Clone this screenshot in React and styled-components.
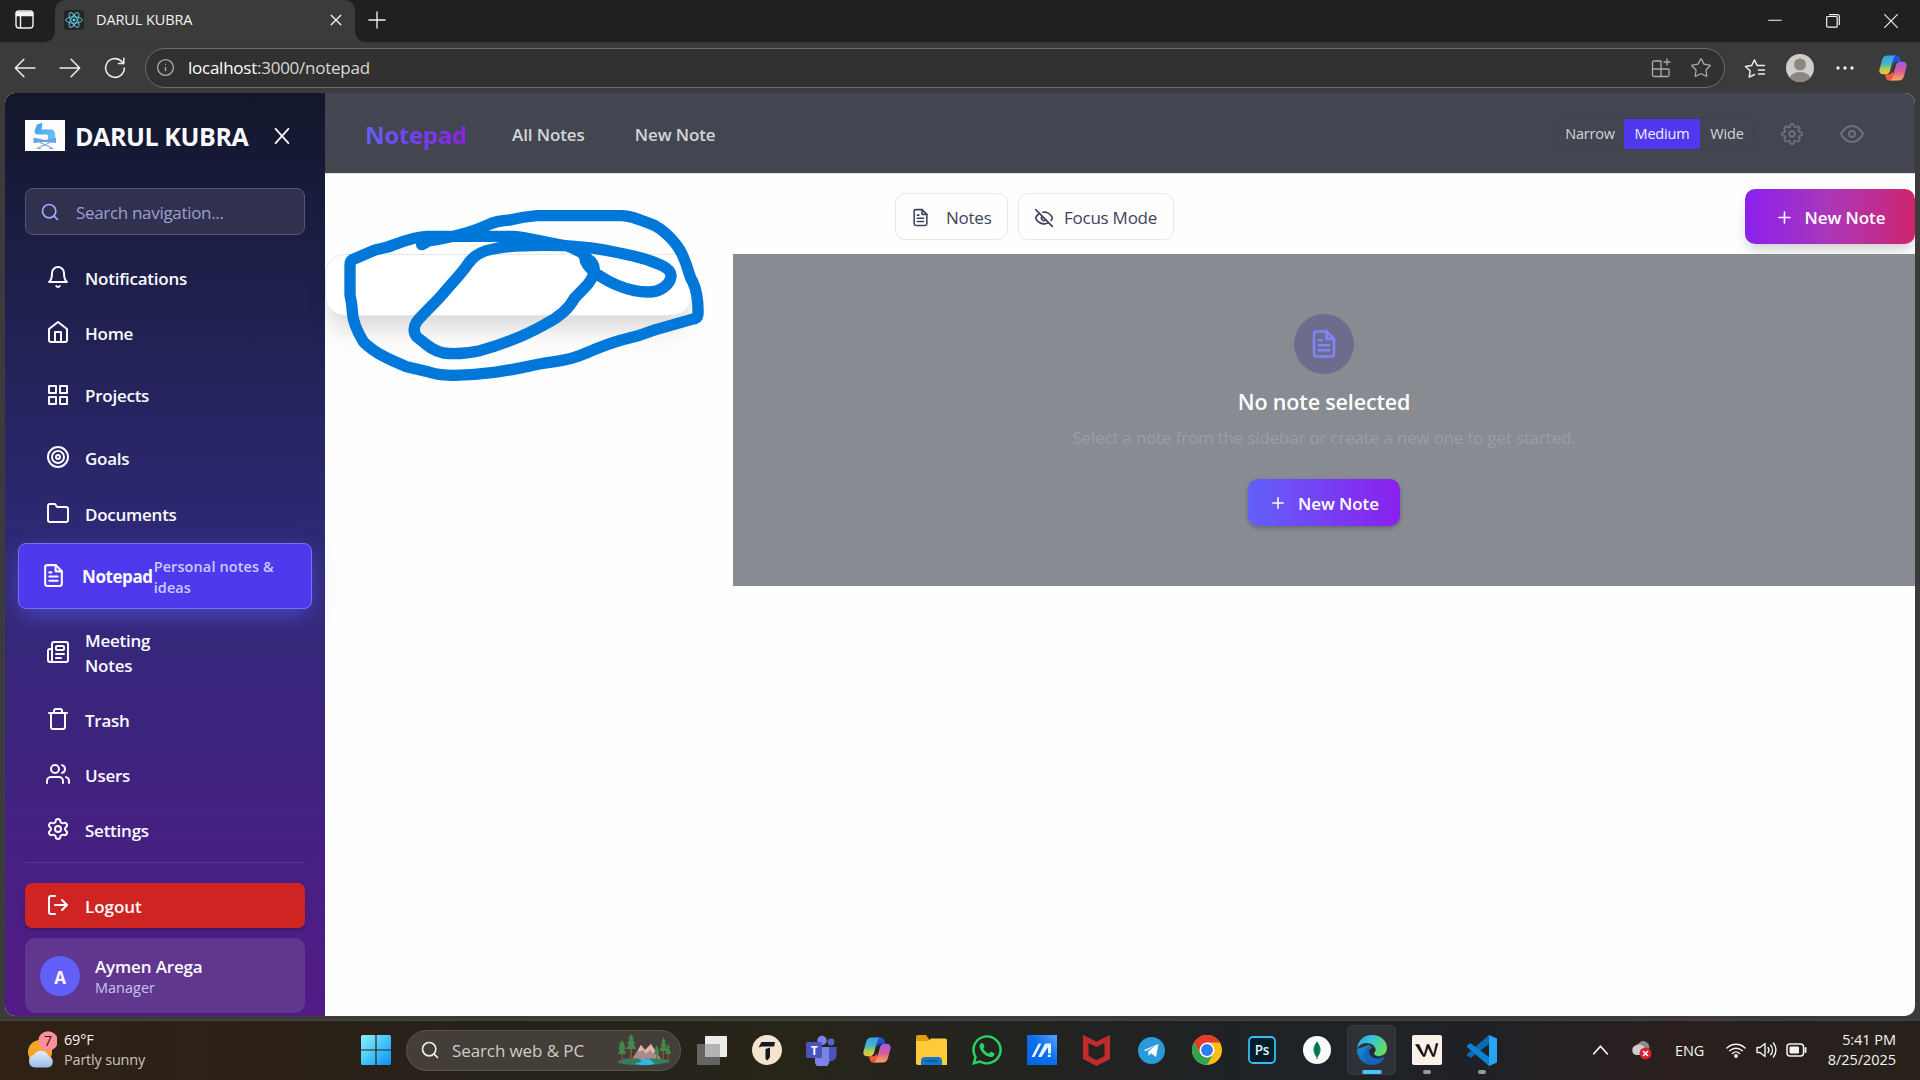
import React from 'react';
import styled, { createGlobalStyle, css } from 'styled-components';
import {
  FiBell, FiHome, FiGrid, FiTarget, FiFolder, FiFileText, FiTrash, FiUsers,
  FiLogOut, FiSettings, FiEye, FiSearch, FiPlus,
} from 'react-icons/fi';
import { Newspaper, Settings, EyeOff, Star, Info } from 'lucide-react';
import { FaWhatsapp } from 'react-icons/fa';

const Global = createGlobalStyle`
  *, *::before, *::after { box-sizing: border-box; }
  body {
    margin: 0;
    overflow: hidden;
    font-family: "Open Sans", "Noto Sans", sans-serif;
    font-size: 17px;
    letter-spacing: -0.25px;
  }
  svg { display: block; flex-shrink: 0; }
  button { font: inherit; letter-spacing: inherit; color: inherit; border: 0; background: none; padding: 0; }
`;

const Desktop = styled.div`
  width: 1920px;
  height: 1080px;
  display: flex;
  flex-direction: column;
  background: #3b3b3b;
  white-space: nowrap;
`;

/* ---------- browser ---------- */
const TabStrip = styled.div`
  height: 42px;
  flex: none;
  display: flex;
  align-items: stretch;
  background: #202020;
  color: #f2f2f2;
`;
const TabActions = styled.div`
  width: 55px;
  padding: 0 0 3px 15px;
  display: flex;
  align-items: center;
`;
const Tab = styled.div`
  width: 300px;
  background: #3b3b3b;
  border-radius: 10px 10px 0 0;
  display: flex;
  align-items: center;
  padding: 0 13px 3px 9px;
  position: relative;
  &::before, &::after {
    content: "";
    position: absolute;
    bottom: 0;
    width: 10px;
    height: 10px;
  }
  &::before { left: -10px; background: radial-gradient(circle at 0 0, transparent 9.5px, #3b3b3b 10px); }
  &::after { right: -10px; background: radial-gradient(circle at 100% 0, transparent 9.5px, #3b3b3b 10px); }
`;
const TabTitle = styled.span`
  flex: 1;
  margin: -1px 0 0 12px;
  font-size: 14.5px;
  letter-spacing: -0.1px;
`;
const Favicon = styled.div`
  width: 20px;
  height: 20px;
  border-radius: 3px;
  background: #242424;
`;
const NewTab = styled.div`
  margin-left: 13px;
  display: flex;
  align-items: center;
  padding-bottom: 3px;
`;
const WindowControls = styled.div`
  margin-left: auto;
  display: flex;
  align-items: center;
`;
const WindowButton = styled.div`
  width: 58px;
  display: flex;
  justify-content: center;
`;
const Toolbar = styled.div`
  height: 51px;
  flex: none;
  display: flex;
  align-items: center;
  color: #ededed;
  padding: 0 0 1px 14px;
  border-top: 1px solid #353535;
`;
const ToolButton = styled.div`
  width: ${(p) => p.$w || 45}px;
  display: flex;
  justify-content: ${(p) => (p.$center ? 'center' : 'flex-start')};
`;
const AddressBar = styled.div`
  width: 1580px;
  height: 40px;
  margin-left: -4px;
  border: 1.5px solid #6c6c6c;
  border-radius: 20px;
  background: #313131;
  display: flex;
  align-items: center;
  padding: 0 12px 0 10px;
  color: #ababab;
`;
const Url = styled.span`
  flex: 1;
  margin-left: 13px;
  color: #d8d8d8;
  b { font-weight: 400; color: #ffffff; }
`;
const AddressAction = styled.div`
  margin-left: 19px;
`;

/* ---------- page shell ---------- */
const Page = styled.div`
  height: 923px;
  margin: 0 5px;
  flex: none;
  display: flex;
  border-radius: 10px;
  overflow: hidden;
  background: #fefefe;
  position: relative;
`;
const Sidebar = styled.aside`
  width: 320px;
  flex: none;
  padding: 0 20px;
  background: linear-gradient(180deg, #12172a 0%, #2f2a78 50%, #521a86 100%);
  color: #fbfbff;
  display: flex;
  flex-direction: column;
`;
const Brand = styled.div`
  height: 31px;
  margin-top: 27px;
  display: flex;
  align-items: center;
`;
const BrandLogo = styled.div`
  width: 40px;
  height: 31px;
  background: #fdfdfd;
  display: flex;
  justify-content: center;
  align-items: center;
`;
const BrandName = styled.span`
  flex: none;
  width: 199px;
  margin-left: 10px;
  font-size: 25px;
  font-weight: 700;
  letter-spacing: -0.4px;
`;
const SearchBox = styled.div`
  height: 47px;
  margin-top: 37px;
  flex: none;
  border: 1px solid #55557c;
  border-radius: 8px;
  background: #30304f;
  display: flex;
  align-items: center;
  padding: 2px 14px 0;
  gap: 16px;
  color: #9d9fd0;
  letter-spacing: -0.32px;
  svg { color: #a3a8ff; margin-bottom: 2px; }
`;
const Nav = styled.nav`
  margin-top: 15.5px;
  flex: none;
`;
const NavRow = styled.div`
  height: ${(p) => p.$h}px;
  display: flex;
  align-items: center;
  padding-left: 20.5px;
  font-weight: 600;
  line-height: 25px;
  svg { margin: -2px 15.5px 0 0; }
`;
const ActiveRow = styled.div`
  height: 66px;
  margin: 0 -7px;
  border: 1px solid #7772f2;
  border-radius: 8px;
  background: #4e39ec;
  box-shadow: 0 8px 22px -2px rgba(97, 95, 255, 0.55);
  display: flex;
  align-items: center;
  padding-left: 22px;
  font-weight: 700;
  letter-spacing: -0.42px;
  svg { margin: -2px 16px 0 0; }
`;
const ActiveHint = styled.span`
  font-size: 14.5px;
  font-weight: 600;
  line-height: 21px;
  color: #c9ccff;
  letter-spacing: 0.1px;
  margin: 1px 0 0 1px;
`;
const Divider = styled.div`
  height: 1px;
  margin: 9px 0 20px;
  flex: none;
  background: #5a378f;
`;
const Logout = styled.div`
  height: 45px;
  flex: none;
  border-radius: 7px;
  background: #cf2522;
  box-shadow: 0 2px 3px rgba(0, 0, 0, 0.2);
  display: flex;
  align-items: center;
  gap: 15.5px;
  padding: 2px 0 0 20.5px;
  font-weight: 600;
  letter-spacing: -0.05px;
  svg { margin-bottom: 3px; }
`;
const UserCard = styled.div`
  height: 75px;
  flex: none;
  margin-top: 10px;
  border-radius: 10px;
  background: #60368e;
  display: flex;
  align-items: center;
  padding-left: 15px;
  gap: 15px;
`;
const Avatar = styled.div`
  width: 40px;
  height: 40px;
  border-radius: 50%;
  background: #6260f8;
  font-weight: 700;
  display: flex;
  align-items: center;
  justify-content: center;
  padding-top: 3px;
`;
const UserText = styled.div`
  display: flex;
  flex-direction: column;
  padding-top: 2px;
  font-weight: 600;
  line-height: 23px;
  letter-spacing: -0.15px;
`;
const Role = styled.span`
  font-size: 14.5px;
  font-weight: 400;
  line-height: 20px;
  color: #c4c6f3;
  letter-spacing: 0;
`;

const Main = styled.main`
  flex: 1;
  display: flex;
  flex-direction: column;
`;
const Header = styled.header`
  height: 81px;
  flex: none;
  background: #434651;
  border-bottom: 1px solid #e4e4e6;
  display: flex;
  align-items: center;
  padding: 1px 51px 0 40px;
  color: #d3d5da;
`;
const Title = styled.h1`
  width: 147px;
  margin: 2px 0 0;
  font-size: 24px;
  font-weight: 700;
  line-height: 34px;
  letter-spacing: -0.3px;
  span {
    background: linear-gradient(90deg, #625ffb, #8b1fee);
    -webkit-background-clip: text;
    background-clip: text;
    color: transparent;
  }
`;
const HeaderLink = styled.span`
  font-weight: 600;
  letter-spacing: -0.1px;
  margin: 1px 50px 0 0;
`;
const Segments = styled.div`
  margin: 0 25px 0 auto;
  width: 200px;
  height: 32px;
  border: 1px solid #3e4150;
  border-radius: 10px;
  display: flex;
  overflow: hidden;
  font-size: 14.5px;
  letter-spacing: -0.2px;
`;
const Segment = styled.div`
  flex: 0 0 ${(p) => p.$w}px;
  display: flex;
  align-items: center;
  justify-content: center;
  ${(p) => p.$on && css`background: #4f39ee; color: #f1efff;`}
`;
const HeaderIcon = styled.div`
  width: 24px;
  margin-right: 36px;
  color: #6c7080;
  display: flex;
  justify-content: center;
  &:last-child { margin-right: 0; }
`;
const Actions = styled.div`
  height: 80px;
  flex: none;
  padding-top: 15px;
  display: flex;
  justify-content: space-between;
  align-items: flex-start;
`;
const ViewToggles = styled.div`
  display: flex;
  gap: 10px;
  padding-top: 4px;
  margin-right: 1px;
`;
const ViewToggle = styled.button`
  height: 47px;
  width: ${(p) => p.$w}px;
  border: 1px solid #e6e7ea;
  border-radius: 10px;
  display: flex;
  align-items: center;
  gap: ${(p) => p.$gap}px;
  padding: 2px 0 0 15px;
  color: #40435a;
`;
const PrimaryButton = styled.button`
  width: ${(p) => (p.$large ? 170 : 152)}px;
  height: ${(p) => (p.$large ? 55 : 47)}px;
  border-radius: 10px;
  display: flex;
  align-items: center;
  justify-content: center;
  gap: 11px;
  padding: 2px 0 0;
  color: #ffffff;
  font-weight: 600;
  letter-spacing: -0.1px;
  background: ${(p) => (p.$large ? 'linear-gradient(90deg, #8a20ee, #ab37b8 50%, #cf256f)' : 'linear-gradient(90deg, #6260f8, #8a20ee)')};
  box-shadow: ${(p) => (p.$large ? '0 8px 14px -3px rgba(0,0,0,.2)' : '0 2px 4px rgba(0,0,0,.25)')};
  svg { margin-bottom: 1px; }
`;
const Workspace = styled.div`
  display: flex;
  align-items: flex-start;
`;
const NotesPanel = styled.div`
  width: 367px;
  height: 62px;
  margin-right: 41px;
  flex: none;
  border: 1px solid #e5e6e8;
  border-radius: 20px;
  background: #ffffff;
  box-shadow: 0 18px 24px -5px rgba(0, 0, 0, 0.15);
`;
const EmptyState = styled.section`
  flex: 1;
  height: 332px;
  background: #888b92;
  display: flex;
  flex-direction: column;
  align-items: center;
  padding-top: 60px;
`;
const EmptyIcon = styled.div`
  width: 60px;
  height: 60px;
  border-radius: 50%;
  background: #6d6c8c;
  color: #7f86fa;
  display: flex;
  align-items: center;
  justify-content: center;
`;
const EmptyTitle = styled.h2`
  margin: 13px 0 0;
  font-size: 21.5px;
  font-weight: 600;
  line-height: 30px;
  letter-spacing: -0.15px;
  color: #ffffff;
`;
const EmptyText = styled.p`
  margin: 8px 0 28px;
  line-height: 26px;
  letter-spacing: -0.19px;
  color: #9a9da9;
`;
const Scribble = styled.svg`
  position: absolute;
  left: 315px;
  top: 87px;
`;

/* ---------- taskbar ---------- */
const Taskbar = styled.footer`
  height: 60px;
  margin-top: 4px;
  flex: none;
  border-top: 1px solid #45423e;
  background: linear-gradient(90deg, #2f2115 0%, #2c2119 14%, #262219 26%, #27241a 42%, #1f2225 64%, #1f2126 76%, #2a1f1e 87%, #27211b 100%);
  display: flex;
  align-items: center;
  padding-bottom: 1px;
  color: #f4f4f4;
  font-size: 14.5px;
  letter-spacing: -0.2px;
`;
const Weather = styled.div`
  width: 361px;
  padding-left: 26px;
  display: flex;
  gap: 7px;
  align-items: center;
`;
const WeatherText = styled.div`
  display: flex;
  flex-direction: column;
  line-height: 20px;
  span { color: #c9c5c0; }
`;
const TaskSearch = styled.div`
  width: 275px;
  height: 41px;
  margin: 0 3px 0 15px;
  border: 1px solid #5a554d;
  border-radius: 21px;
  background: #433f38;
  display: flex;
  align-items: center;
  padding: 0 9px 0 13px;
  font-size: 17px;
  letter-spacing: -0.1px;
  color: #cfccc8;
  span { flex: 1; margin-left: 12px; }
`;
const TaskApp = styled.div`
  width: 55px;
  height: 50px;
  display: flex;
  align-items: center;
  justify-content: center;
  position: relative;
`;
const ActiveApp = styled(TaskApp)`
  width: 49px;
  margin: 0 3px;
  border-radius: 5px;
  background: #2e3237;
  border: 1px solid #373b40;
`;
const Indicator = styled.i`
  position: absolute;
  left: 50%;
  transform: translateX(-50%);
  bottom: ${(p) => (p.$on ? 0 : 1)}px;
  width: ${(p) => (p.$on ? 20 : 8)}px;
  height: 4px;
  border-radius: 2px;
  background: ${(p) => (p.$on ? '#4cc2ff' : '#9a9a9a')};
`;
const Tray = styled.div`
  margin-left: auto;
  padding-right: 24px;
  display: flex;
  align-items: center;
`;
const TrayItem = styled.div`
  margin-right: ${(p) => p.$gap}px;
`;
const Clock = styled.div`
  width: 70px;
  text-align: right;
  line-height: 20px;
  letter-spacing: -0.05px;
`;

const Line = ({ w = 20, h = 20, sw = 1.5, d, ...rest }) => (
  <svg width={w} height={h} viewBox="0 0 20 20" fill="none" stroke="currentColor" strokeWidth={sw} strokeLinecap="round" strokeLinejoin="round" {...rest}>
    <path d={d} />
  </svg>
);

const Copilot = ({ size = 28, id }) => (
  <svg width={size} height={size} viewBox="0 0 28 28">
    <defs>
      <linearGradient id={`${id}a`} x1="0" y1="0" x2="0" y2="1">
        <stop offset="0" stopColor="#3aa0f0" />
        <stop offset=".45" stopColor="#45b6c4" />
        <stop offset=".75" stopColor="#b9cf45" />
        <stop offset="1" stopColor="#f0c231" />
      </linearGradient>
      <linearGradient id={`${id}b`} x1="0" y1="0" x2="0" y2="1">
        <stop offset="0" stopColor="#9a5cf0" />
        <stop offset=".5" stopColor="#dd5b96" />
        <stop offset="1" stopColor="#f9a860" />
      </linearGradient>
    </defs>
    <path d="M12 1.500h6c2 0 2.800 1.500 3.300 3.200l.9 3H18c-2 0-3 1-3.600 3z" fill="#2250d6" />
    <path d="M16 26.500h-6c-2 0-2.800-1.500-3.300-3.200l-.9-3H10c2 0 3-1 3.600-3z" fill="#ee5a3c" />
    <path d="M8.500 1.500H17c-1.600.5-2.200 2-2.700 3.800l-3.200 11.200c-.7 2.500-2 3.800-4.300 3.800H4C1 20.300-.2 18 .6 15L3.200 5.500C4 2.800 5.600 1.500 8.500 1.500z" fill={`url(#${id}a)`} />
    <path d="M19.500 26.500H11c1.600-.5 2.200-2 2.700-3.800l3.200-11.200c.7-2.500 2-3.800 4.300-3.800H24c3 0 4.200 2.300 3.400 5.300l-2.600 9.500c-.8 2.700-2.400 4-5.300 4z" fill={`url(#${id}b)`} />
  </svg>
);

const ReactMark = () => (
  <svg width="20" height="20" viewBox="-10 -10 20 20" fill="none" stroke="#61c4e0" strokeWidth="1">
    <circle r="1.500" fill="#61c4e0" stroke="none" />
    <ellipse rx="8.300" ry="3.200" transform="rotate(0)" />
    <ellipse rx="8.300" ry="3.200" transform="rotate(60)" />
    <ellipse rx="8.300" ry="3.200" transform="rotate(120)" />
  </svg>
);

const ChairMark = () => (
  <svg width="26" height="28" viewBox="0 0 26 28">
    <defs>
      <linearGradient id="chair" x1="0" y1="0" x2="1" y2="1">
        <stop offset="0" stopColor="#3b9cf0" />
        <stop offset="1" stopColor="#6cc6f7" />
      </linearGradient>
    </defs>
    <path d="M5 2.500 10.500.8 9.500 7.500h9.200c3 0 4.500 2.500 4.500 5.500v4H16v-2.800c0-1.200-.5-1.700-1.500-1.700H6c-2.500 0-3.800-1.500-3.300-4z" fill="url(#chair)" />
    <path d="M1.500 15.500 13 18l11-2.500V21l-11-1-11.500 1z" fill="#6aa3e2" />
    <path d="M6 26l13-6M20 26l-13-6M4.500 26.500h4.500M17 26.500h4.500" stroke="#86aede" strokeWidth="1.200" fill="none" />
  </svg>
);

const WeatherIcon = () => (
  <svg width="31" height="38" viewBox="0 0 31 38">
    <defs>
      <linearGradient id="cloud" x1="0" y1="0" x2="0" y2="1">
        <stop offset="0" stopColor="#e4edfb" />
        <stop offset="1" stopColor="#9dbbe9" />
      </linearGradient>
    </defs>
    <circle cx="14" cy="21" r="12" fill="#f3a626" />
    <path d="M9 36.500a6.500 6.500 0 0 1-1-12.800 8 8 0 0 1 14.500 1.500A5.800 5.800 0 0 1 22 36.500z" fill="url(#cloud)" />
    <circle cx="22" cy="10" r="9.800" fill="#fd8f98" />
    <text x="22" y="15" textAnchor="middle" fontSize="14" fill="#3a1418">7</text>
  </svg>
);

const StartIcon = () => (
  <svg width="30" height="30" viewBox="0 0 30 30">
    <defs>
      <linearGradient id="win" x1="0" y1="0" x2="1" y2="1">
        <stop offset="0" stopColor="#8ef0ff" />
        <stop offset=".45" stopColor="#4ccbfb" />
        <stop offset="1" stopColor="#0b8df3" />
      </linearGradient>
    </defs>
    <path d="M0 1.500A1.500 1.500 0 0 1 1.500 0H14.400V14.400H0zM15.600 0H28.500A1.500 1.500 0 0 1 30 1.500V14.400H15.600zM0 15.600H14.400V30H1.500A1.500 1.500 0 0 1 0 28.500zM15.600 15.600H30V28.500A1.500 1.500 0 0 1 28.500 30H15.600z" fill="url(#win)" />
  </svg>
);

const Landscape = () => (
  <svg width="54" height="32" viewBox="0 0 54 32">
    <path d="M15 25 24 11l4 5 6-6 10 15z" fill="#a98a88" />
    <path d="M24 11l4 5 6-6 5 8-3 2-3-4-4 4-3-4-4 2-1-2z" fill="#ddb5aa" />
    <path d="M0 28c6-5 16-4 25-3 10-1 22-1 29 2-8 5-46 6-54 1z" fill="#2f8062" />
    <path d="M22 25h10l6 4.500c-6 2-14 2-20 0l7-2z" fill="#35b5e8" />
    <g fill="#8a512c"><path d="M4.500 12h1.500v16H4.500zM13 4h2v24h-2zM45.300 8H47v18h-1.700zM39.200 16h1v9h-1zM50.600 14h1.200v13h-1.200z" /></g>
    <g fill="#43884a">
      <path d="M5 6l3 5H7l2 4H7l2 5H1l2-5H1l2-4H2zM14 0l3 5h-1.500l3 5h-2l3 5H9l3-5h-2l3-5h-2zM46 3l3 5h-1.500l2.500 4h-2l3 5h-9l3-5h-2l2.500-4h-1zM39.700 11l2 4h-1l2 5h-6l2-5h-1zM51.200 10l2 4h-1l2 6h-6l2-6h-1z" />
    </g>
  </svg>
);

const Folder = () => (
  <svg width="31" height="32" viewBox="0 0 31 32">
    <path d="M0 3a2 2 0 0 1 2-2h8l3 4v4H0z" fill="#dd9c10" />
    <path d="M0 7h12l3-2.500h14a2 2 0 0 1 2 2V31H2a2 2 0 0 1-2-2z" fill="#ffcb3a" />
    <path d="M5 31v-4a4 4 0 0 1 4-4h13a4 4 0 0 1 4 4v4z" fill="#1277c9" />
    <path d="M9 27h13" stroke="#0b4d8c" strokeWidth="1.300" />
  </svg>
);

const Teams = () => (
  <svg width="31" height="31" viewBox="0 0 31 31">
    <circle cx="25" cy="7" r="3.400" fill="#5b62cf" />
    <path d="M20 12h10.500v8a6 6 0 0 1-7 6z" fill="#4a52bd" />
    <circle cx="16" cy="5.500" r="4.700" fill="#7b83eb" />
    <path d="M9 12h14v11a7 7 0 0 1-14 5z" fill="#7b83eb" />
    <rect x="0" y="7" width="16" height="16" rx="1.500" fill="#4b53bc" />
    <text x="8" y="19.500" textAnchor="middle" fontSize="12" fontWeight="700" fill="#fff">T</text>
  </svg>
);

const TypingMark = () => (
  <svg width="30" height="30" viewBox="0 0 30 30">
    <circle cx="15" cy="15" r="15" fill="#f7e4cf" />
    <path d="M9.500 7H23l-.8 4.500H9.500L6.500 12.500zM13.500 14l4.500-1.500V22l-2.500 3.500-2-1.500z" fill="#15191f" />
  </svg>
);

const Asus = () => (
  <svg width="30" height="30" viewBox="0 0 30 30">
    <defs>
      <linearGradient id="asus" x1="1" y1="0" x2="0" y2="1">
        <stop offset="0" stopColor="#57a6ff" />
        <stop offset=".45" stopColor="#0a6fee" />
        <stop offset="1" stopColor="#0364e6" />
      </linearGradient>
    </defs>
    <rect width="30" height="30" fill="url(#asus)" />
    <path d="M4.500 22 11.500 8.500h3l-7 13.500zM11 22 18 8.500h6v10h-3V12L14.500 22zM20.800 19.800h3V22h-3z" fill="#e7f2ff" />
  </svg>
);

const McAfee = () => (
  <svg width="27" height="31" viewBox="0 0 27 31">
    <path d="M0 0 13.500 6.500 27 0v24l-13.500 7L0 24zM5.500 8v13l8 4.200 8-4.200V8l-8 4z" fill="#c22b2c" fillRule="evenodd" />
  </svg>
);

const Telegram = () => (
  <svg width="27" height="27" viewBox="0 0 27 27">
    <circle cx="13.500" cy="13.500" r="13.500" fill="#2a9bd8" />
    <path d="M5.500 13.300 20.500 7l-2.500 13-5-3.700-2.300 2.400-.5-4.200 7-6-8.700 5.300z" fill="#fff" />
  </svg>
);

const Chrome = () => (
  <svg width="30" height="30" viewBox="-15 -15 30 30">
    <circle r="15" fill="#fbbf15" />
    <path d="M-13-7.500A15 15 0 0 1 13-7.500H0L-6.500 3.800z" fill="#e33b2e" />
    <path d="M-13-7.500-6.500 3.750 0 7.500 6.500 3.750 0 15A15 15 0 0 1-13-7.500z" fill="#32a350" />
    <circle r="7.500" fill="#fff" />
    <circle r="5.900" fill="#2f7cf0" />
  </svg>
);

const Photoshop = () => (
  <svg width="28" height="28" viewBox="0 0 28 28">
    <rect x="1" y="1" width="26" height="26" rx="4" fill="#031d2b" stroke="#2fc0f5" strokeWidth="1.800" />
    <text x="14" y="18.500" textAnchor="middle" fontSize="13.500" fontWeight="600" fill="#dff4ff">Ps</text>
  </svg>
);

const Mongo = () => (
  <svg width="28" height="28" viewBox="0 0 28 28">
    <circle cx="14" cy="14" r="14" fill="#f9fbfa" />
    <path d="M14 5.500c4.300 5 5 10 .5 15.500h-1C9 15.500 9.700 10.500 14 5.500z" fill="#0b8050" />
    <path d="M14 6v17" stroke="#065f3d" strokeWidth="1" />
  </svg>
);

const Edge = () => (
  <svg width="30" height="30" viewBox="0 0 30 30">
    <defs>
      <linearGradient id="edge1" x1="0" y1="0" x2="1" y2=".4">
        <stop offset="0" stopColor="#2aa7ea" />
        <stop offset=".5" stopColor="#34c4d5" />
        <stop offset="1" stopColor="#63dd66" />
      </linearGradient>
      <linearGradient id="edge2" x1="0" y1="0" x2="1" y2="1">
        <stop offset="0" stopColor="#1b8fe0" />
        <stop offset="1" stopColor="#0b4f9e" />
      </linearGradient>
    </defs>
    <path d="M0 14a15 15 0 0 0 15 16c5 0 9.500-2.300 12-6 .5-1-.3-1.700-1.300-1.200L12 10z" fill="url(#edge2)" />
    <path d="M0 14C1 5 7 0 15 0c9 0 15 6 15 13 0 5-4 8-8 8-3.500 0-5-1.300-5-2.500 0-1 1.500-1.500 1.500-4C18.500 11 14.500 8 9.500 8 5 8 1.500 10.500 0 14z" fill="url(#edge1)" />
    <path d="M13.800 11.500c-5 .5-7.500 5-6.300 9.500 1.200 4.300 4.700 7.500 9 8.500 4.500-.7 8-3 10.500-6.200.3-.9-.4-1.400-1.300-1-6.500 2.500-13 .5-13.700-5.300 0-2.200.6-4 1.800-5.500z" fill="#1566b8" />
    <path d="M12 16.500c.5 5.500 7 8.500 13 6 .5-.3 1-.7 1-1.200-5 1.200-9-.3-9-2.800 0-1 1.500-1.500 1.500-4-2-2.800-6.500-1-6.500 2z" fill="#26282d" />
  </svg>
);

const WriteMark = () => (
  <svg width="30" height="30" viewBox="0 0 30 30">
    <rect width="30" height="30" rx="2" fill="#faf1e7" />
    <path d="M3.500 9.500h3.500L12 20l3-10.500h2L21.500 20 24 8.500h2L22.500 21.500h-2L16 12.500 13 21.500h-2z" fill="#111" stroke="#111" strokeWidth=".5" />
  </svg>
);

const VSCode = () => (
  <svg width="30" height="31" viewBox="0 0 30 31">
    <path d="M22 0v9L3.500 23 0 20.500V19z" fill="#0a6bb5" />
    <path d="M22 31v-9L3.500 8 0 10.500V12z" fill="#0e80cf" />
    <path d="M22 0l8 3.500v24L22 31z" fill="#27a5f2" />
  </svg>
);

const DesktopStack = () => (
  <svg width="30" height="29" viewBox="0 0 30 29">
    <rect x="8" y="0" width="22" height="21" rx="1" fill="#ececec" />
    <rect x="0" y="8" width="23" height="21" rx="1" fill="#6f6f6f" fillOpacity=".85" />
    <rect x="8" y="8" width="15" height="13" fill="#b4b4b4" />
  </svg>
);

const NAV_TOP = [
  ['Notifications', FiBell, 55],
  ['Home', FiHome, 55],
  ['Projects', FiGrid, 70],
  ['Goals', FiTarget, 55],
  ['Documents', FiFolder, 57.5],
];
const NAV_BOTTOM = [
  [<>Meeting<br />Notes</>, Newspaper, 88],
  ['Trash', FiTrash, 46],
  ['Users', FiUsers, 64],
  ['Settings', Settings, 46],
];
const PINNED = [
  <DesktopStack />, <TypingMark />, <Teams />, <Copilot id="task" size={28} />, <Folder />,
  <FaWhatsapp size={34} color="#25d366" />, <Asus />, <McAfee />, <Telegram />, <Chrome />, <Photoshop />, <Mongo />,
];

export default function App() {
  return (
    <Desktop>
      <Global />
      <TabStrip>
        <TabActions>
          <svg width="19" height="19" viewBox="0 0 19 19" fill="none" stroke="currentColor" strokeWidth="1.400">
            <rect x="1" y="1" width="17" height="17" rx="3" />
            <path d="M1.500 2.500h16v3h-16z" fill="currentColor" />
            <path d="M5.500 5v13" />
          </svg>
        </TabActions>
        <Tab>
          <Favicon><ReactMark /></Favicon>
          <TabTitle>DARUL KUBRA</TabTitle>
          <Line w={12} h={12} sw={2.2} d="M2 2l16 16M18 2L2 18" />
        </Tab>
        <NewTab><Line w={18} h={18} sw={1.5} d="M10 1v18M1 10h18" /></NewTab>
        <WindowControls>
          <WindowButton><Line w={14} h={14} sw={1.5} d="M1 9h18" /></WindowButton>
          <WindowButton>
            <svg width="14" height="14" viewBox="0 0 14 14" fill="none" stroke="currentColor" strokeWidth="1.200">
              <rect x=".7" y="2.500" width="10.500" height="10.700" rx="1" />
              <path d="M3 .7h8.300a2 2 0 0 1 2 2V11" />
            </svg>
          </WindowButton>
          <WindowButton><Line w={14} h={14} sw={1.7} d="M1 1l18 18M19 1L1 19" /></WindowButton>
        </WindowControls>
      </TabStrip>
      <Toolbar>
        <ToolButton><Line w={22} h={22} sw={1.4} d="M19 10H1.500M9 2L1.200 10L9 18" /></ToolButton>
        <ToolButton><Line w={22} h={22} sw={1.4} d="M1 10h17.500M11 2l7.800 8L11 18" /></ToolButton>
        <ToolButton><Line w={22} h={22} sw={1.4} d="M18.500 10a8.500 8.500 0 1 1-3-6.500L18 6M18 1.200V6h-4.800" /></ToolButton>
        <AddressBar>
          <Info size={19} strokeWidth={1.7} />
          <Url><b>localhost</b>:3000/notepad</Url>
          <AddressAction><Line w={20} h={20} sw={1.3} d="M10 3H3a1.500 1.500 0 0 0-1.500 1.500V17A1.500 1.500 0 0 0 3 18.500h13.500A1.500 1.500 0 0 0 18 17v-6H1.500M10 3v15.500M16 1v6M13 4h6" /></AddressAction>
          <AddressAction><Star size={22} strokeWidth={1.4} /></AddressAction>
        </AddressBar>
        <ToolButton $w={60} $center>
          <svg width="22" height="22" viewBox="0 0 22 22" fill="none" stroke="currentColor" strokeWidth="1.500" strokeLinecap="round" strokeLinejoin="round">
            <path d="M10.500 17.500l-5.300 2.700 1-6.200L1.500 9.500l6-.9L10.500 3l2.700 5.600h7.300M14.500 13h6M14.500 17h6" />
          </svg>
        </ToolButton>
        <ToolButton $w={30} $center>
          <svg width="28" height="28" viewBox="0 0 28 28">
            <defs><clipPath id="profile"><circle cx="14" cy="14" r="14" /></clipPath></defs>
            <circle cx="14" cy="14" r="14" fill="#d3cdca" />
            <g clipPath="url(#profile)" fill="#8c8683"><circle cx="14" cy="10.500" r="6" /><ellipse cx="14" cy="25" rx="10.500" ry="7" /></g>
          </svg>
        </ToolButton>
        <ToolButton $w={60} $center>
          <svg width="18" height="4" viewBox="0 0 18 4" fill="currentColor"><circle cx="2" cy="2" r="1.700" /><circle cx="9" cy="2" r="1.700" /><circle cx="16" cy="2" r="1.700" /></svg>
        </ToolButton>
        <ToolButton $w={36} $center><Copilot id="bar" size={28} /></ToolButton>
      </Toolbar>

      <Page>
        <Sidebar>
          <Brand>
            <BrandLogo><ChairMark /></BrandLogo>
            <BrandName>DARUL KUBRA</BrandName>
            <Line w={16} h={16} sw={2.2} d="M2 1l16 18M18 1L2 19" />
          </Brand>
          <SearchBox><FiSearch size={20} />Search navigation...</SearchBox>
          <Nav>
            {NAV_TOP.map(([label, Icon, h]) => (
              <NavRow key={label} $h={h}><Icon size={24} />{label}</NavRow>
            ))}
            <ActiveRow><FiFileText size={25} />Notepad<ActiveHint>Personal notes &amp;<br />ideas</ActiveHint></ActiveRow>
            {NAV_BOTTOM.map(([label, Icon, h], i) => (
              <NavRow key={i} $h={h}><Icon size={24} /><span>{label}</span></NavRow>
            ))}
          </Nav>
          <Divider />
          <Logout><FiLogOut size={24} />Logout</Logout>
          <UserCard>
            <Avatar>A</Avatar>
            <UserText>Aymen Arega<Role>Manager</Role></UserText>
          </UserCard>
        </Sidebar>

        <Main>
          <Header>
            <Title><span>Notepad</span></Title>
            <HeaderLink>All Notes</HeaderLink>
            <HeaderLink>New Note</HeaderLink>
            <Segments>
              <Segment $w={68}>Narrow</Segment>
              <Segment $w={76} $on>Medium</Segment>
              <Segment $w={54}>Wide</Segment>
            </Segments>
            <HeaderIcon><FiSettings size={22} /></HeaderIcon>
            <HeaderIcon><FiEye size={24} /></HeaderIcon>
          </Header>
          <Actions>
            <span />
            <ViewToggles>
              <ViewToggle $w={113} $gap={16}><FiFileText size={19} />Notes</ViewToggle>
              <ViewToggle $w={156} $gap={10}><EyeOff size={20} />Focus Mode</ViewToggle>
            </ViewToggles>
            <PrimaryButton $large><FiPlus size={19} />New Note</PrimaryButton>
          </Actions>
          <Workspace>
            <NotesPanel />
            <EmptyState>
              <EmptyIcon><FiFileText size={30} /></EmptyIcon>
              <EmptyTitle>No note selected</EmptyTitle>
              <EmptyText>Select a note from the sidebar or create a new one to get started.</EmptyText>
              <PrimaryButton><FiPlus size={18} />New Note</PrimaryButton>
            </EmptyState>
          </Workspace>
        </Main>

        <Scribble width="420" height="220" viewBox="0 0 1260 660" fill="none" stroke="#0078d9" strokeWidth="34" strokeLinecap="round" strokeLinejoin="round">
          <path d="M305 194 L325 183 Q360 178 390 171 Q450 158 500 136 Q530 122 570 120 Q610 110 650 107 H905 C935 107 955 118 1005 137 C1045 160 1080 202 1090 232 C1105 262 1105 285 1118 305 C1132 335 1135 365 1134 402 Q1133 416 1115 418 L1010 448 Q960 468 905 480 C850 495 810 515 770 530 C730 545 690 545 640 556 C560 572 500 585 400 586 Q360 586 330 577 L260 560 C210 540 165 520 130 485 C115 460 98 430 97 395 Q96 370 90 345 V255 Q90 240 102 237 L165 210 L200 202 C240 188 280 170 320 169 H580 C630 172 680 190 735 197 C810 202 850 207 940 228 Q985 238 1025 256 Q1055 270 1053 290 C1050 315 1020 336 985 336 C930 337 870 310 828 280 Q795 255 794 232 M794 232 Q825 245 823 275 C815 310 785 330 763 355 C745 390 710 415 675 433 C610 470 540 495 480 512 Q420 525 370 519 C330 510 310 485 290 470 Q275 450 290 425 C310 400 340 375 370 340 C400 305 425 280 445 250 Q470 215 520 207 C590 192 680 195 738 197 Q770 207 794 225" />
        </Scribble>
      </Page>

      <Taskbar>
        <Weather>
          <WeatherIcon />
          <WeatherText>69°F<span>Partly sunny</span></WeatherText>
        </Weather>
        <StartIcon />
        <TaskSearch><FiSearch size={20} color="#efefef" /><span>Search web &amp; PC</span><Landscape /></TaskSearch>
        {PINNED.map((icon, i) => <TaskApp key={i}>{icon}</TaskApp>)}
        <ActiveApp><Edge /><Indicator $on /></ActiveApp>
        <TaskApp><WriteMark /><Indicator /></TaskApp>
        <TaskApp><VSCode /><Indicator /></TaskApp>
        <Tray>
          <TrayItem $gap={23}><Line w={15} h={10} sw={2.4} d="M1 15L10 5l9 10" viewBox="0 4 20 12" /></TrayItem>
          <TrayItem $gap={23}>
            <svg width="21" height="20" viewBox="0 0 21 20">
              <path d="M8 3a6 6 0 0 1 10 6l-6 3-6-4z" fill="#8b8b8b" />
              <path d="M5 15a5 5 0 0 1-.5-9.500A6 6 0 0 1 14 9l-3 6z" fill="#cdcdcd" />
              <circle cx="14.500" cy="13.500" r="6" fill="#d81f2a" />
              <path d="M12 11l5 5M17 11l-5 5" stroke="#fff" strokeWidth="1.600" />
            </svg>
          </TrayItem>
          <TrayItem $gap={22}>ENG</TrayItem>
          <TrayItem $gap={10}>
            <svg width="20" height="16" viewBox="0 0 20 16" fill="none" stroke="currentColor" strokeWidth="1.500" strokeLinecap="round">
              <path d="M1 6a12.500 12.500 0 0 1 18 0M3.800 8.800a8.800 8.800 0 0 1 12.400 0M6.500 11.500a5 5 0 0 1 7 0" /><circle cx="10" cy="14" r="1.200" fill="currentColor" />
            </svg>
          </TrayItem>
          <TrayItem $gap={9}>
            <svg width="21" height="18" viewBox="0 0 21 18" fill="none" stroke="currentColor" strokeWidth="1.400" strokeLinecap="round" strokeLinejoin="round">
              <path d="M1 6.500h3L9 2.500v13L4 11.500H1zM12 6.500a4 4 0 0 1 0 5M14.700 4.200a7.500 7.500 0 0 1 0 9.600M17.400 2a11 11 0 0 1 0 14" />
            </svg>
          </TrayItem>
          <TrayItem $gap={19}>
            <svg width="21" height="14" viewBox="0 0 21 14" fill="none" stroke="currentColor" strokeWidth="1.500">
              <rect x="1" y="1" width="16.500" height="12" rx="3" /><rect x="3.500" y="3.500" width="9.500" height="7" rx="1" fill="currentColor" stroke="none" /><path d="M19.500 5v4" strokeWidth="2" strokeLinecap="round" />
            </svg>
          </TrayItem>
          <Clock>5:41 PM<br />8/25/2025</Clock>
        </Tray>
      </Taskbar>
    </Desktop>
  );
}
